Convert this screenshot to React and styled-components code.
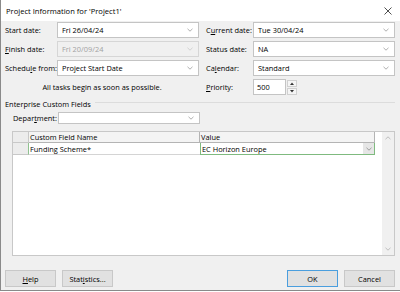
import styled, { createGlobalStyle } from "styled-components"

const Global = createGlobalStyle`
html, body { margin: 0; padding: 0; background: #fff; }
body { font-family: "Open Sans", "Noto Sans", sans-serif; font-size: 7.4px; color: #000; }
`

function Chevron({ color = "#a0a0a0" }) {
    return (
        <svg width="6" height="4" viewBox="0 0 6 4">
            <path d="M0.5 0.8 L3 3.2 L5.5 0.8" fill="none" stroke={color} strokeWidth="0.8" />
        </svg>
    )
}

function Combo({ value, disabled, width }) {
    return (
        <ComboBox disabled={disabled} style={width ? { width } : undefined}>
            <span>{value}</span>
            <Chevron color={disabled ? "#c8c8c8" : "#9a9a9a"} />
        </ComboBox>
    )
}

export default function App() {
    return (
        <>
            <Global />
            <Window>
                <TitleBar>
                    <span>Project Information for 'Project1'</span>
                    <svg width="8" height="8" viewBox="0 0 8 8">
                        <path d="M0.5 0.5 L7.5 7.5 M7.5 0.5 L0.5 7.5" stroke="#222" strokeWidth="0.8" />
                    </svg>
                </TitleBar>
                <Body>
                    <Form>
                        <Label>Start date:</Label>
                        <Combo value="Fri 26/04/24" />
                        <Label right>C<u>u</u>rrent date:</Label>
                        <Combo value="Tue 30/04/24" />

                        <Label><u>F</u>inish date:</Label>
                        <Combo value="Fri 20/09/24" disabled />
                        <Label right>Status date:</Label>
                        <Combo value="NA" />

                        <Label>Schedu<u>l</u>e from:</Label>
                        <Combo value="Project Start Date" />
                        <Label right>Ca<u>l</u>endar:</Label>
                        <Combo value="Standard" />

                        <Note>All tasks begin as soon as possible.</Note>
                        <Label right><u>P</u>riority:</Label>
                        <PriorityWrap>
                            <NumberBox>500</NumberBox>
                            <Spinner>
                                <SpinButton>
                                    <svg width="4" height="3" viewBox="0 0 4 3"><path d="M0 3 L2 0.5 L4 3Z" fill="#333" /></svg>
                                </SpinButton>
                                <SpinButton>
                                    <svg width="4" height="3" viewBox="0 0 4 3"><path d="M0 0 L2 2.5 L4 0Z" fill="#333" /></svg>
                                </SpinButton>
                            </Spinner>
                        </PriorityWrap>
                    </Form>

                    <GroupHead>
                        <span>Enterprise Custom Fields</span>
                        <Rule />
                    </GroupHead>

                    <DeptRow>
                        <DeptLabel>Depar<u>t</u>ment:</DeptLabel>
                        <Combo value="" width="142px" />
                    </DeptRow>

                    <Table>
                        <Columns>
                            <HeadRow>
                                <Selector head />
                                <HeadCell w="171px">Custom Field Name</HeadCell>
                                <HeadCell w="175px">Value</HeadCell>
                            </HeadRow>
                            <DataRow>
                                <Selector />
                                <Cell w="171px">Funding Scheme*</Cell>
                                <EditCell>
                                    <span>EC Horizon Europe</span>
                                    <CellDrop><Chevron color="#888" /></CellDrop>
                                </EditCell>
                            </DataRow>
                        </Columns>
                        <ScrollBar>
                            <svg width="6" height="4" viewBox="0 0 6 4"><path d="M0.5 3.2 L3 0.8 L5.5 3.2" fill="none" stroke="#b0b0b0" strokeWidth="0.8" /></svg>
                            <svg width="6" height="4" viewBox="0 0 6 4"><path d="M0.5 0.8 L3 3.2 L5.5 0.8" fill="none" stroke="#b0b0b0" strokeWidth="0.8" /></svg>
                        </ScrollBar>
                    </Table>

                    <Footer>
                        <Buttons>
                            <Button><u>H</u>elp</Button>
                            <Button>Stat<u>i</u>stics...</Button>
                        </Buttons>
                        <Buttons>
                            <Button primary>OK</Button>
                            <Button>Cancel</Button>
                        </Buttons>
                    </Footer>
                </Body>
            </Window>
        </>
    )
}

const Window = styled.div`
width: 400px;
height: 291px;
box-sizing: border-box;
border-left: 1px solid #8a8a8a;
border-bottom: 1px solid #8a8a8a;
display: flex;
flex-direction: column;
background-color: #f0f0f0;
`
const TitleBar = styled.div`
height: 21px;
flex: none;
background-color: #fff;
display: flex;
align-items: center;
justify-content: space-between;
padding: 0 8px 0 5px;
font-size: 7.6px;
svg { margin-top: 1px; }
`
const Body = styled.div`
flex: 1;
display: flex;
flex-direction: column;
padding: 1px 5px 0 4px;
`
const Form = styled.div`
display: grid;
grid-template-columns: 52px 142px 54px 142px;
grid-auto-rows: 16px;
row-gap: 3px;
align-items: center;
`
const Label = styled.div`
padding-left: ${p => (p.right ? "7px" : "0")};
white-space: nowrap;
`
const ComboBox = styled.div`
height: 16px;
box-sizing: border-box;
border: 1px solid ${p => (p.disabled ? "#d6d6d6" : "#c4c4c4")};
background-color: ${p => (p.disabled ? "#f0f0f0" : "#fff")};
color: ${p => (p.disabled ? "#a2a2a2" : "#000")};
display: flex;
align-items: center;
justify-content: space-between;
padding: 0 5px 0 4px;
span { white-space: nowrap; }
`
const Note = styled.div`
grid-column: 1 / span 2;
text-align: center;
`
const PriorityWrap = styled.div`
display: flex;
align-items: center;
gap: 1px;
`
const NumberBox = styled.div`
width: 33px;
height: 16px;
box-sizing: border-box;
border: 1px solid #c4c4c4;
background-color: #fff;
padding-left: 3px;
display: flex;
align-items: center;
`
const Spinner = styled.div`
display: flex;
flex-direction: column;
gap: 1px;
`
const SpinButton = styled.div`
width: 10px;
height: 7px;
box-sizing: border-box;
border: 1px solid #d0d0d0;
background-color: #f5f5f5;
display: flex;
align-items: center;
justify-content: center;
`
const GroupHead = styled.div`
display: flex;
align-items: center;
gap: 4px;
margin-top: 4px;
height: 10px;
`
const Rule = styled.div`
flex: 1;
height: 1px;
background-color: #dcdcdc;
margin-top: -3px;
`
const DeptRow = styled.div`
display: flex;
align-items: center;
height: 12px;
margin-top: 3px;
padding-left: 8px;
> div:last-child { height: 12px; }
`
const DeptLabel = styled.div`
width: 45px;
`
const Table = styled.div`
margin: 7px 0 0 7px;
height: 125px;
box-sizing: border-box;
border: 1px solid #c8c8c8;
background-color: #fff;
display: flex;
justify-content: space-between;
`
const Columns = styled.div`
display: flex;
flex-direction: column;
`
const HeadRow = styled.div`
display: flex;
height: 11px;
`
const DataRow = styled.div`
display: flex;
height: 12px;
`
const Selector = styled.div`
width: 16px;
box-sizing: border-box;
background-color: #ececec;
border-right: 1px solid ${p => (p.head ? "#c8c8c8" : "#8fc28f")};
border-bottom: 1px solid #c8c8c8;
`
const HeadCell = styled.div`
width: ${p => p.w};
box-sizing: border-box;
background-color: #f4f4f4;
border-right: 1px solid #b4b4b4;
border-bottom: 1px solid #b4b4b4;
padding-left: 1px;
display: flex;
align-items: center;
`
const Cell = styled.div`
width: ${p => p.w};
box-sizing: border-box;
border-bottom: 1px solid #d4d4d4;
padding-left: 1px;
display: flex;
align-items: center;
`
const EditCell = styled.div`
width: 175px;
box-sizing: border-box;
border: 1px solid #7fba7f;
border-top: none;
display: flex;
align-items: center;
justify-content: space-between;
padding-left: 1px;
`
const CellDrop = styled.div`
width: 11px;
height: 100%;
background-color: #e6e6e6;
display: flex;
align-items: center;
justify-content: center;
`
const ScrollBar = styled.div`
width: 12px;
background-color: #f0f0f0;
display: flex;
flex-direction: column;
justify-content: space-between;
align-items: center;
padding: 4px 0 4px;
`
const Footer = styled.div`
display: flex;
justify-content: space-between;
margin-top: 14px;
`
const Buttons = styled.div`
display: flex;
gap: 6px;
`
const Button = styled.button`
width: 51px;
height: 17px;
box-sizing: border-box;
border: 1px solid ${p => (p.primary ? "#4a9ede" : "#c8c8c8")};
background-color: #e1e1e1;
font-family: inherit;
font-size: 7.4px;
color: #000;
padding: 0;
`
